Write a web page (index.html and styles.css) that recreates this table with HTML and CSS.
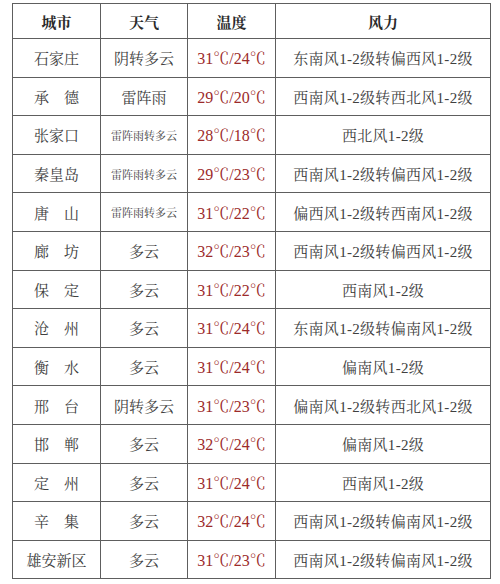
FILE: index.html
```html
<!DOCTYPE html>
<html lang="zh">
<head>
<meta charset="utf-8">
<link rel="stylesheet" href="styles.css">
</head>
<body>
<table class="wx">
<colgroup><col class="c1"><col class="c2"><col class="c3"><col class="c4"></colgroup>
<thead>
<tr><th>城市</th><th>天气</th><th>温度</th><th>风力</th></tr>
</thead>
<tbody>
<tr><td>石家庄</td><td>阴转多云</td><td class="t">31℃/24℃</td><td class="w">东南风1-2级转偏西风1-2级</td></tr>
<tr><td>承　德</td><td>雷阵雨</td><td class="t">29℃/20℃</td><td class="w">西南风1-2级转西北风1-2级</td></tr>
<tr><td>张家口</td><td class="s">雷阵雨转多云</td><td class="t">28℃/18℃</td><td class="w">西北风1-2级</td></tr>
<tr><td>秦皇岛</td><td class="s">雷阵雨转多云</td><td class="t">29℃/23℃</td><td class="w">西南风1-2级转偏西风1-2级</td></tr>
<tr><td>唐　山</td><td class="s">雷阵雨转多云</td><td class="t">31℃/22℃</td><td class="w">偏西风1-2级转西南风1-2级</td></tr>
<tr><td>廊　坊</td><td>多云</td><td class="t">32℃/23℃</td><td class="w">西南风1-2级转偏西风1-2级</td></tr>
<tr><td>保　定</td><td>多云</td><td class="t">31℃/22℃</td><td class="w">西南风1-2级</td></tr>
<tr><td>沧　州</td><td>多云</td><td class="t">31℃/24℃</td><td class="w">东南风1-2级转偏南风1-2级</td></tr>
<tr><td>衡　水</td><td>多云</td><td class="t">31℃/24℃</td><td class="w">偏南风1-2级</td></tr>
<tr><td>邢　台</td><td>阴转多云</td><td class="t">31℃/23℃</td><td class="w">偏南风1-2级转西北风1-2级</td></tr>
<tr><td>邯　郸</td><td>多云</td><td class="t">32℃/24℃</td><td class="w">偏南风1-2级</td></tr>
<tr><td>定　州</td><td>多云</td><td class="t">31℃/24℃</td><td class="w">西南风1-2级</td></tr>
<tr><td>辛　集</td><td>多云</td><td class="t">32℃/24℃</td><td class="w">西南风1-2级转偏南风1-2级</td></tr>
<tr><td>雄安新区</td><td>多云</td><td class="t">31℃/23℃</td><td class="w">西南风1-2级转偏南风1-2级</td></tr>
</tbody>
</table>
</body>
</html>
```
FILE: styles.css
```css
html, body {
  margin: 0;
  padding: 0;
  background: #ffffff;
}
body {
  padding: 3px 0 0 12px;
  font-family: "Liberation Serif", "Noto Serif CJK SC", "Noto Sans CJK SC", serif;
  color: #404040;
}
.wx {
  border-collapse: collapse;
  table-layout: fixed;
  width: 478px;
}
.c1 { width: 88px; }
.c2 { width: 87px; }
.c3 { width: 88px; }
.c4 { width: 215px; }
.wx th, .wx td {
  border: 1px solid #5e5e5e;
  padding: 0;
  text-align: center;
  vertical-align: middle;
  white-space: nowrap;
}
.wx thead tr { height: 35px; }
.wx tbody tr { height: 38.6px; }
.wx th {
  font-size: 15px;
  font-weight: bold;
  color: #2a2a2a;
}
.wx td {
  font-size: 15px;
}
.wx td.s {
  font-size: 11px;
}
.wx td.t {
  font-size: 16px;
  color: #9c2a2a;
}
.wx td.w {
  font-size: 15px;
  letter-spacing: 0.3px;
}
```
